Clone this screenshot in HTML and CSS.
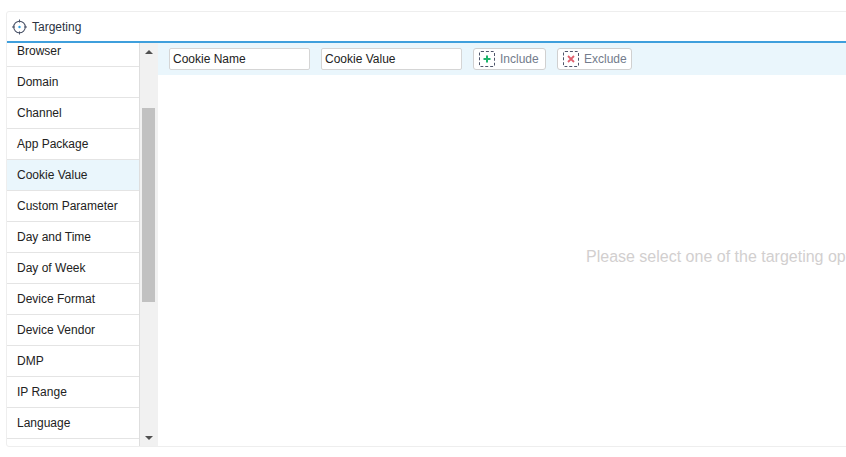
FILE: index.html
```html
<!DOCTYPE html>
<html lang="en">
<head>
<meta charset="utf-8">
<title>Targeting</title>
<link rel="stylesheet" href="styles.css">
</head>
<body>
<section class="card">
  <header class="card-head">
    <svg class="target-icon" width="16" height="16" viewBox="0 0 16 16" aria-hidden="true">
      <circle cx="7.5" cy="8" r="5.8" fill="none" stroke="#4a5368" stroke-width="1.1"/>
      <path d="M7.5 0.5V3.5M7.5 12.5V15.5M0 8H3M12 8H15" stroke="#4a5368" stroke-width="1.1"/>
      <circle cx="7.5" cy="8" r="1.2" fill="#2f9fe0"/>
    </svg>
    <span class="card-title">Targeting</span>
  </header>
  <div class="card-body">
    <div class="side">
      <ul class="options">
        <li class="option">Browser</li>
        <li class="option">Domain</li>
        <li class="option">Channel</li>
        <li class="option">App Package</li>
        <li class="option is-active">Cookie Value</li>
        <li class="option">Custom Parameter</li>
        <li class="option">Day and Time</li>
        <li class="option">Day of Week</li>
        <li class="option">Device Format</li>
        <li class="option">Device Vendor</li>
        <li class="option">DMP</li>
        <li class="option">IP Range</li>
        <li class="option">Language</li>
        <li class="option"></li>
      </ul>
      <div class="scrollbar">
        <span class="arrow arrow-up"></span>
        <div class="track"><div class="thumb"></div></div>
        <span class="arrow arrow-down"></span>
      </div>
    </div>
    <main class="main">
      <div class="toolbar">
        <input class="field" type="text" value="Cookie Name">
        <input class="field" type="text" value="Cookie Value">
        <button class="btn btn-include" type="button">
          <span class="btn-icon">
            <svg width="8" height="8" viewBox="0 0 8 8" aria-hidden="true"><path d="M4 0.5V7.5M0.5 4H7.5" stroke="#1bb36a" stroke-width="2"/></svg>
          </span>Include
        </button>
        <button class="btn btn-exclude" type="button">
          <span class="btn-icon">
            <svg width="8" height="8" viewBox="0 0 8 8" aria-hidden="true"><path d="M1 1L7 7M7 1L1 7" stroke="#e0606e" stroke-width="1.8"/></svg>
          </span>Exclude
        </button>
      </div>
      <div class="placeholder"><span class="placeholder-text">Please select one of the targeting options</span></div>
    </main>
  </div>
</section>
</body>
</html>
```

FILE: styles.css
```css
* { box-sizing: border-box; }

html, body {
  margin: 0;
  height: 100%;
  overflow: hidden;
  background: #fff;
}

body {
  padding: 11px 0 0 6px;
  font-family: "Liberation Sans", Arial, sans-serif;
  font-size: 12px;
  color: #222;
}

.card {
  width: 860px;
  height: 436px;
  border: 1px solid #eee;
  border-radius: 3px;
  display: flex;
  flex-direction: column;
  overflow: hidden;
}

.card-head {
  height: 31px;
  flex: none;
  display: flex;
  align-items: center;
  gap: 4px;
  padding-left: 5px;
  border-bottom: 2px solid #3f9fdc;
}

.card-title { color: #2b3342; }

.target-icon { flex: none; }

.card-body {
  flex: 1;
  min-height: 0;
  display: flex;
}

.side {
  width: 151px;
  flex: none;
  display: flex;
}

.options {
  width: 133px;
  flex: none;
  margin: 0;
  padding: 0;
  list-style: none;
  overflow: hidden;
  border-right: 1px solid #dedede;
}

.option {
  height: 31px;
  flex: none;
  padding-left: 10px;
  line-height: 30px;
  border-bottom: 1px solid #e4e4e4;
}

.option:first-child { margin-top: -7px; }

.is-active { background: #eaf6fc; }

.scrollbar {
  width: 18px;
  flex: none;
  background: #f1f1f1;
  display: flex;
  flex-direction: column;
  align-items: center;
}

.arrow {
  height: 17px;
  flex: none;
  display: flex;
  align-items: center;
}

.arrow::before {
  content: "";
  border-left: 4px solid transparent;
  border-right: 4px solid transparent;
}

.arrow-up::before { border-bottom: 4px solid #505050; }
.arrow-down::before { border-top: 4px solid #505050; }

.track {
  flex: 1;
  width: 100%;
  padding: 48px 3px 0 2px;
}

.thumb {
  height: 194px;
  background: #c1c1c1;
}

.main {
  flex: 1;
  min-width: 0;
  display: flex;
  flex-direction: column;
}

.toolbar {
  height: 32px;
  flex: none;
  display: flex;
  align-items: center;
  gap: 11px;
  padding: 0 11px;
  background: #eaf6fc;
}

.field {
  width: 141px;
  height: 22px;
  padding: 0 3px;
  font: inherit;
  color: #222;
  background: #fff;
  border: 1px solid #d5d5d5;
  border-radius: 2px;
}

.btn {
  height: 22px;
  display: flex;
  align-items: center;
  gap: 5px;
  padding: 0 0 0 5px;
  font: inherit;
  color: #737c8c;
  background: #fff;
  border: 1px solid #d0d0d0;
  border-radius: 3px;
}

.btn-include { width: 73px; }
.btn-exclude { width: 75px; }

.btn-icon {
  width: 16px;
  height: 16px;
  display: flex;
  align-items: center;
  justify-content: center;
  border: 1px dashed #4f566b;
  border-radius: 2px;
}

.placeholder {
  flex: 1;
  display: flex;
  align-items: center;
  padding: 0 0 8px 428px;
  white-space: nowrap;
}

.placeholder-text {
  font-size: 16px;
  color: #d2cfcf;
}
```
